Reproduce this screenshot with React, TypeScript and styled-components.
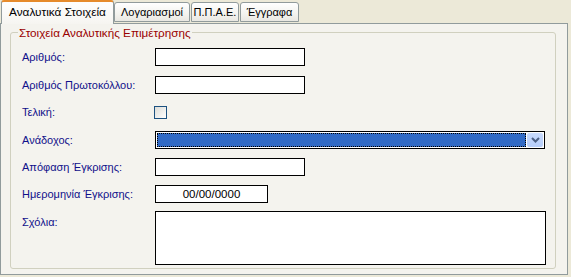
import React from "react";
import styled, { createGlobalStyle } from "styled-components";

const Global = createGlobalStyle`
  html, body { margin: 0; padding: 0; background: #ECE9D8; }
  body { font-family: Tahoma, "Liberation Sans", "DejaVu Sans", sans-serif; font-size: 11px; }
  * { box-sizing: border-box; }
`;

const Window = styled.div`
  width: 571px;
  height: 277px;
  background: #ece9d8;
  display: flex;
  flex-direction: column;
  overflow: hidden;
`;

const TabStrip = styled.div`
  display: flex;
  align-items: flex-end;
  height: 23px;
  padding-left: 1px;
  position: relative;
  z-index: 1;
`;

const Tab = styled.div<{ $active?: boolean; $w: number }>`
  width: ${(p) => p.$w}px;
  height: ${(p) => (p.$active ? 24 : 20)}px;
  margin-right: ${(p) => (p.$active ? 0 : 1)}px;
  margin-bottom: ${(p) => (p.$active ? -1 : 1)}px;
  border: 1px solid #919b9c;
  border-bottom: ${(p) => (p.$active ? "none" : "1px solid #919b9c")};
  border-radius: 3px 3px 0 0;
  border-top: ${(p) => (p.$active ? "2px solid #e68b2c" : "1px solid #919b9c")};
  background: ${(p) =>
    p.$active
      ? "linear-gradient(#fefefe, #f6f5f1)"
      : "linear-gradient(#ffffff, #f3f3ef 60%, #e9e8e2)"};
  color: #000;
  font-size: ${(p) => (p.$active ? 11.8 : 11)}px;
  display: flex;
  align-items: ${(p) => (p.$active ? "flex-start" : "center")};
  padding-top: ${(p) => (p.$active ? 3 : 0)}px;
  justify-content: center;
  white-space: nowrap;
`;

const Panel = styled.div`
  width: 568px;
  height: 252px;
  border: 1px solid #919b9c;
  background: #f4f3ee;
  padding: 8px 11px 5px 9px;
  display: flex;
`;

const GroupBox = styled.div`
  position: relative;
  flex: 1;
  border: 1px solid #d0d0bf;
  border-radius: 3px;
  padding: 15px 0 0 11px;
  display: flex;
  flex-direction: column;
`;

const Legend = styled.span`
  position: absolute;
  top: -7px;
  left: 7px;
  padding: 0 1px;
  background: #f4f3ee;
  color: #9a0000;
  font-size: 11.7px;
  line-height: 13px;
`;

const Row = styled.div<{ $h: number }>`
  display: flex;
  align-items: flex-start;
  height: ${(p) => p.$h}px;
  flex: none;
`;

const Label = styled.div<{ $top?: number }>`
  width: 133px;
  flex: none;
  color: #10108a;
  line-height: 18px;
  padding-top: ${(p) => p.$top ?? 0}px;
  white-space: nowrap;
`;

const TextBox = styled.div<{ $w: number; $h?: number; $center?: boolean }>`
  width: ${(p) => p.$w}px;
  height: ${(p) => p.$h ?? 18}px;
  border: 1px solid #000;
  background: #fff;
  text-align: ${(p) => (p.$center ? "center" : "left")};
  line-height: 16px;
  font-size: 11.5px;
  color: #000;
`;

const CheckCell = styled.div`
  height: 18px;
  display: flex;
  align-items: center;
  margin-left: -1px;
`;

const CheckBox = styled.div`
  width: 13px;
  height: 13px;
  border: 1px solid #1c5180;
  background: linear-gradient(135deg, #dcdcd7, #ffffff);
`;

const Combo = styled.div`
  width: 390px;
  height: 18px;
  border: 1px solid #000;
  background: #fff;
  padding: 1px;
  display: flex;
`;

const ComboValue = styled.div`
  flex: 1;
  background: #316ac5;
  outline: 1px dotted #000;
  outline-offset: -1px;
  border: 1px dotted #fff;
`;

const ComboButton = styled.div`
  width: 16px;
  margin-left: 1px;
  border-radius: 2px;
  background: linear-gradient(#c8dafc, #b6cdf9);
  display: flex;
  align-items: center;
  justify-content: center;
`;

export default function App() {
  return (
    <Window>
      <Global />
      <TabStrip>
        <Tab $active $w={113}>Αναλυτικά Στοιχεία</Tab>
        <Tab $w={76}>Λογαριασμοί</Tab>
        <Tab $w={48}>Π.Π.Α.Ε.</Tab>
        <Tab $w={59}>Έγγραφα</Tab>
      </TabStrip>
      <Panel>
        <GroupBox>
          <Legend>Στοιχεία Αναλυτικής Επιμέτρησης</Legend>
          <Row $h={28}>
            <Label>Αριθμός:</Label>
            <TextBox $w={150} />
          </Row>
          <Row $h={27}>
            <Label>Αριθμός Πρωτοκόλλου:</Label>
            <TextBox $w={150} />
          </Row>
          <Row $h={28}>
            <Label>Τελική:</Label>
            <CheckCell>
              <CheckBox />
            </CheckCell>
          </Row>
          <Row $h={27}>
            <Label>Ανάδοχος:</Label>
            <Combo>
              <ComboValue />
              <ComboButton>
                <svg width="9" height="6" viewBox="0 0 9 6">
                  <path d="M1 1 L4.5 4.5 L8 1" stroke="#4d6185" strokeWidth="2" fill="none" />
                </svg>
              </ComboButton>
            </Combo>
          </Row>
          <Row $h={27}>
            <Label>Απόφαση Έγκρισης:</Label>
            <TextBox $w={150} />
          </Row>
          <Row $h={26}>
            <Label>Ημερομηνία Έγκρισης:</Label>
            <TextBox $w={113} $center>00/00/0000</TextBox>
          </Row>
          <Row $h={54}>
            <Label $top={2}>Σχόλια:</Label>
            <TextBox $w={391} $h={54} />
          </Row>
        </GroupBox>
      </Panel>
    </Window>
  );
}
